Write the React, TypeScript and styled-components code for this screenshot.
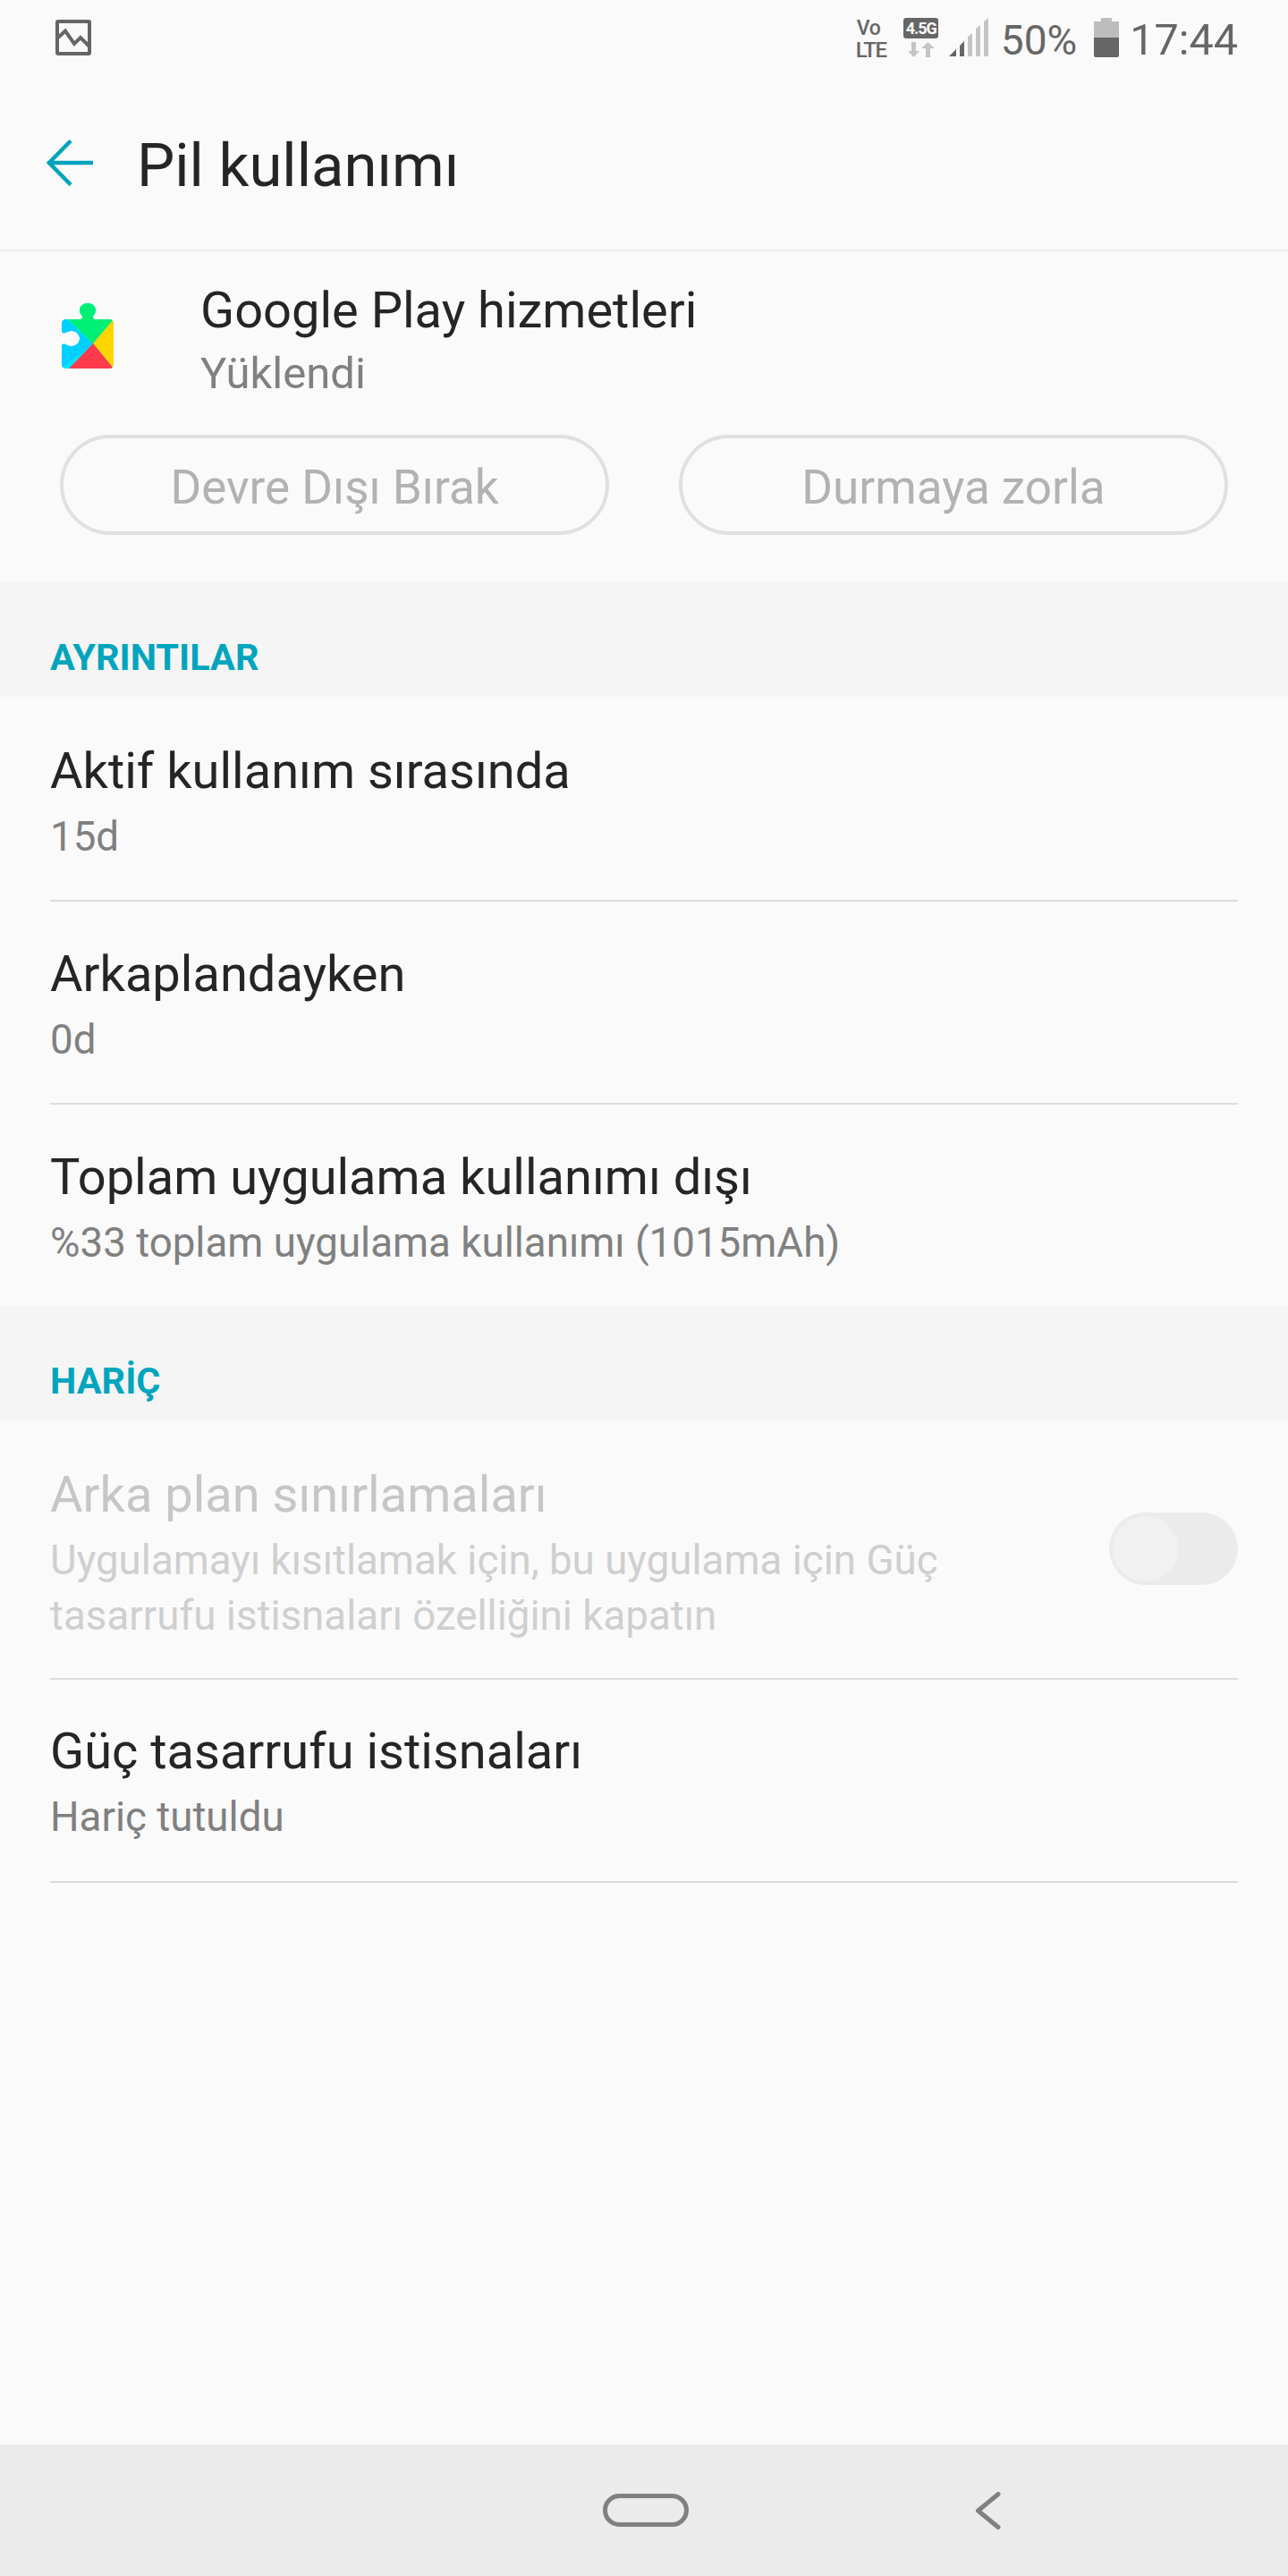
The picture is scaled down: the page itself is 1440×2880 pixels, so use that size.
import React from 'react';
import styled, { createGlobalStyle } from 'styled-components';

const Color = {
  Page: '#fafafa',
  Section: '#f5f5f5',
  Accent: '#00a5bd',
  Title: '#252525',
  Sub: '#808080',
  Disabled: '#c6c6c6',
  Status: '#666666',
  StatusLight: '#c4c4c4',
  Divider: '#dcdcdc',
  Nav: '#ebebeb',
};

const GlobalStyle = createGlobalStyle`
  html, body {
    margin: 0;
    padding: 0;
    background: ${Color.Page};
  }
  * {
    box-sizing: border-box;
  }
`;

const Screen = styled.div`
  width: 1440px;
  height: 2880px;
  display: flex;
  flex-direction: column;
  background: ${Color.Page};
  font-family: Roboto, 'Liberation Sans', sans-serif;
`;

const StatusBar = styled.div`
  height: 80px;
  padding: 3px 56px 0 62px;
  display: flex;
  align-items: center;
  color: ${Color.Status};
`;

const StatusRight = styled.div`
  margin-left: auto;
  display: flex;
  align-items: center;
`;

const VoLte = styled.div`
  width: 38px;
  margin: 4px 15px 0 0;
  display: flex;
  flex-direction: column;
  align-items: flex-start;
  font-weight: 500;
  line-height: 24px;
`;

const VoText = styled.span`
  font-size: 23px;
  letter-spacing: -0.5px;
  margin-left: 1px;
`;

const LteText = styled.span`
  font-size: 24px;
  letter-spacing: -1.5px;
`;

const NetworkBox = styled.div`
  width: 40px;
  margin-right: 11px;
  display: flex;
  flex-direction: column;
  align-items: center;
  gap: 4px;
`;

const NetworkBadge = styled.div`
  width: 39px;
  height: 23px;
  border-radius: 3px;
  background: ${Color.Status};
  color: #fafafa;
  font-size: 18px;
  line-height: 23px;
  font-weight: 700;
  text-align: center;
  letter-spacing: -1px;
`;

const StatusText = styled.span<{ $size: number; $left: number; $right: number }>`
  font-size: ${(p) => p.$size}px;
  line-height: 40px;
  margin: 6px ${(p) => p.$right}px 0 ${(p) => p.$left}px;
  color: ${Color.Status};
`;

const Toolbar = styled.div`
  height: 201px;
  padding: 5px 0 0 52px;
  display: flex;
  align-items: center;
  border-bottom: 2px solid #ececec;
`;

const PageTitle = styled.h1`
  margin: 5px 0 0 47px;
  font-size: 67px;
  line-height: 80px;
  font-weight: 400;
  color: ${Color.Title};
`;

const AppHeader = styled.div`
  height: 370px;
  display: flex;
  flex-direction: column;
`;

const AppInfo = styled.div`
  height: 205px;
  padding: 31px 0 0 69px;
  display: flex;
`;

const AppIcon = styled.div`
  width: 58px;
  padding-top: 27px;
  margin-right: 97px;
`;

const AppName = styled.div`
  font-size: 56px;
  line-height: 70px;
  color: ${Color.Title};
`;

const AppState = styled.div`
  font-size: 49px;
  line-height: 71px;
  color: ${Color.Sub};
`;

const ButtonRow = styled.div`
  padding: 0 67px;
  display: flex;
  gap: 78px;
`;

const PillButton = styled.div`
  flex: 1;
  height: 112px;
  padding-top: 6px;
  border: 4px solid #e0e0e0;
  border-radius: 56px;
  display: flex;
  align-items: center;
  justify-content: center;
  font-size: 53px;
  color: #b2b2b2;
`;

const SectionHeader = styled.div`
  height: 128px;
  padding: 59px 56px 0;
  background: ${Color.Section};
  color: ${Color.Accent};
  font-size: 41.5px;
  line-height: 50px;
  font-weight: 700;
`;

const Row = styled.div<{ $height: number; $top?: number; $last?: boolean }>`
  height: ${(p) => p.$height}px;
  margin: 0 56px;
  padding-top: ${(p) => p.$top ?? 46}px;
  display: flex;
  align-items: flex-start;
  border-bottom: ${(p) => (p.$last ? 'none' : `2px solid ${Color.Divider}`)};
`;

const RowText = styled.div`
  flex: 1;
`;

const RowTitle = styled.div<{ $disabled?: boolean }>`
  font-size: 56px;
  line-height: 70px;
  color: ${(p) => (p.$disabled ? Color.Disabled : Color.Title)};
`;

const RowSub = styled.div<{ $disabled?: boolean }>`
  font-size: 45.7px;
  line-height: 62px;
  margin-top: 8px;
  color: ${(p) => (p.$disabled ? '#cfcfcf' : Color.Sub)};
`;

const SwitchTrack = styled.div`
  width: 144px;
  height: 81px;
  margin-top: 55px;
  padding: 4px;
  border-radius: 41px;
  background: ${Color.Nav};
`;

const SwitchKnob = styled.div`
  width: 73px;
  height: 73px;
  border-radius: 50%;
  background: #f1f1f1;
`;

const NavBar = styled.div`
  margin-top: auto;
  height: 147px;
  padding-left: 674px;
  display: flex;
  align-items: center;
  gap: 321px;
  background: ${Color.Nav};
`;

function ImageIcon() {
  return (
    <svg width="40" height="40" viewBox="0 0 40 40" fill="none" stroke={Color.Status} strokeWidth="4">
      <rect x="2" y="2" width="36" height="36" rx="1" />
      <path d="M3 20 L11 12.5 L21 27 L28 20 L38 30" />
    </svg>
  );
}

function NetworkArrows() {
  return (
    <svg width="30" height="17" viewBox="0 0 30 17" fill={Color.StatusLight}>
      <path d="M4 0h5v10h4l-6.500 7L0 10h4z" />
      <path d="M20 17h5V7h5L22.500 0 15 7h5z" />
    </svg>
  );
}

function SignalIcon() {
  return (
    <svg width="44" height="43" viewBox="0 0 44 43">
      <path d="M0 43 L8 35 V43 Z" fill={Color.Status} />
      <path d="M12 31 L17 26 V43 H12 Z" fill={Color.Status} />
      <path d="M21 21 L26 17 V43 H21 Z" fill={Color.StatusLight} />
      <path d="M30 12 L35 8 V43 H30 Z" fill={Color.StatusLight} />
      <path d="M39 4 L44 0 V43 H39 Z" fill={Color.StatusLight} />
    </svg>
  );
}

function BatteryIcon() {
  return (
    <svg width="28" height="44" viewBox="0 0 28 44">
      <rect x="8" y="0" width="12" height="5" fill="#bdbdbd" />
      <rect x="0" y="4" width="28" height="19" fill="#bdbdbd" />
      <path d="M0 22h28v20a2 2 0 0 1-2 2H2a2 2 0 0 1-2-2z" fill={Color.Status} />
    </svg>
  );
}

function BackArrow() {
  return (
    <svg width="54" height="54" viewBox="0 0 54 54" fill="none" stroke={Color.Accent} strokeWidth="4.500">
      <path d="M3 27 H52" />
      <path d="M27 2.500 L3 27 L27 51.500" />
    </svg>
  );
}

function PlayServicesIcon() {
  return (
    <svg width="58" height="73" viewBox="0 0 58 73">
      <defs>
        <clipPath id="puzzle">
          <path d="M5 18 H20 C23 18 24 16 22.500 14 C20 11 20 9 20 8 C20 3 24 0 29 0 C34 0 38 3 38 8 C38 10 37 12 35.500 14 C34 16 35 18 38 18 H53 C56 18 58 20 58 23 V68 C58 71 56 73 53 73 H5 C2 73 0 71 0 68 V48 C0 46 2 45 4 46 C6 47 8 48 11 48 C16 48 20 44 20 39.500 C20 35 16 31 11 31 C8 31 6 32 4 33 C2 34 0 33 0 31 V23 C0 20 2 18 5 18 Z" />
        </clipPath>
      </defs>
      <g clipPath="url(#puzzle)">
        <rect width="58" height="73" fill="#00e5ff" />
        <path d="M5 18 L35 45 L0 73 V18 Z" fill="#00d0ff" />
        <path d="M0 0 H58 V18 L35 45 L7 18 Z" fill="#00f076" />
        <path d="M58 18 V73 L35 45 Z" fill="#ffd500" />
        <path d="M35 45 L58 73 H8 Z" fill="#ff3a4c" />
      </g>
    </svg>
  );
}

function HomePill() {
  return (
    <svg width="96" height="37" viewBox="0 0 96 37" fill="none" stroke={Color.Sub} strokeWidth="5">
      <rect x="2.500" y="2.500" width="91" height="32" rx="16" />
    </svg>
  );
}

function NavBack() {
  return (
    <svg width="28" height="42" viewBox="0 0 28 42" fill="none" stroke={Color.Sub} strokeWidth="5" strokeLinecap="round" strokeLinejoin="round">
      <path d="M25 2.500 L2.500 21 L25 39.500" />
    </svg>
  );
}

export default function App() {
  return (
    <Screen>
      <GlobalStyle />
      <StatusBar>
        <ImageIcon />
        <StatusRight>
          <VoLte>
            <VoText>Vo</VoText>
            <LteText>LTE</LteText>
          </VoLte>
          <NetworkBox>
            <NetworkBadge>4.5G</NetworkBadge>
            <NetworkArrows />
          </NetworkBox>
          <SignalIcon />
          <StatusText $size={46} $left={14} $right={19}>50%</StatusText>
          <BatteryIcon />
          <StatusText $size={48.5} $left={12} $right={0}>17:44</StatusText>
        </StatusRight>
      </StatusBar>
      <Toolbar>
        <BackArrow />
        <PageTitle>Pil kullanımı</PageTitle>
      </Toolbar>
      <AppHeader>
        <AppInfo>
          <AppIcon>
            <PlayServicesIcon />
          </AppIcon>
          <div>
            <AppName>Google Play hizmetleri</AppName>
            <AppState>Yüklendi</AppState>
          </div>
        </AppInfo>
        <ButtonRow>
          <PillButton>Devre Dışı Bırak</PillButton>
          <PillButton>Durmaya zorla</PillButton>
        </ButtonRow>
      </AppHeader>
      <SectionHeader>AYRINTILAR</SectionHeader>
      <Row $height={229} $top={48}>
        <RowText>
          <RowTitle>Aktif kullanım sırasında</RowTitle>
          <RowSub>15d</RowSub>
        </RowText>
      </Row>
      <Row $height={227}>
        <RowText>
          <RowTitle>Arkaplandayken</RowTitle>
          <RowSub>0d</RowSub>
        </RowText>
      </Row>
      <Row $height={225} $last>
        <RowText>
          <RowTitle>Toplam uygulama kullanımı dışı</RowTitle>
          <RowSub>%33 toplam uygulama kullanımı (1015mAh)</RowSub>
        </RowText>
      </Row>
      <SectionHeader>HARİÇ</SectionHeader>
      <Row $height={290} $top={48}>
        <RowText>
          <RowTitle $disabled>Arka plan sınırlamaları</RowTitle>
          <RowSub $disabled>
            Uygulamayı kısıtlamak için, bu uygulama için Güç
            <br />
            tasarrufu istisnaları özelliğini kapatın
          </RowSub>
        </RowText>
        <SwitchTrack>
          <SwitchKnob />
        </SwitchTrack>
      </Row>
      <Row $height={227} $top={45}>
        <RowText>
          <RowTitle>Güç tasarrufu istisnaları</RowTitle>
          <RowSub>Hariç tutuldu</RowSub>
        </RowText>
      </Row>
      <NavBar>
        <HomePill />
        <NavBack />
      </NavBar>
    </Screen>
  );
}
